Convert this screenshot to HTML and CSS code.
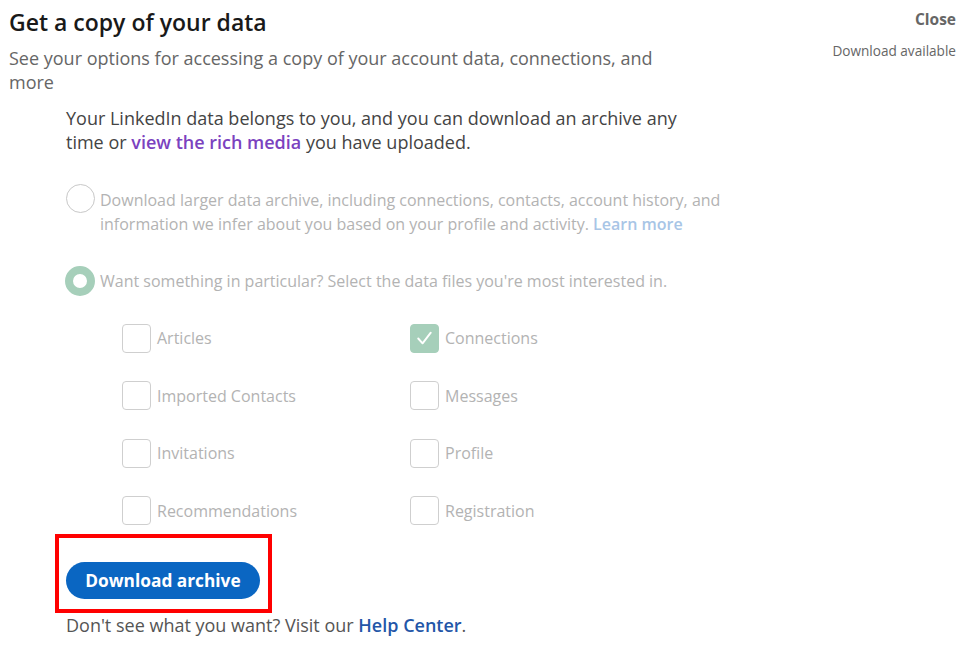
FILE: index.html
```html
<!DOCTYPE html>
<html lang="en">
<head>
<meta charset="utf-8">
<title>Get a copy of your data</title>
<link rel="stylesheet" href="styles.css">
</head>
<body>
<header class="header">
  <div class="header-text">
    <h1 class="title">Get a copy of your data</h1>
    <p class="subtitle">See your options for accessing a copy of your account data, connections, and more</p>
  </div>
  <div class="header-side">
    <a class="close">Close</a>
    <span class="status">Download available</span>
  </div>
</header>
<main class="content">
  <p class="intro">Your LinkedIn data belongs to you, and you can download an archive any time or <a class="media-link">view the rich media</a> you have uploaded.</p>

  <div class="option">
    <span class="radio"></span>
    <p class="option-text">Download larger data archive, including connections, contacts, account history, and information we infer about you based on your profile and activity. <a class="learn">Learn more</a></p>
  </div>

  <div class="option option-selected">
    <span class="radio radio-on"></span>
    <p class="option-text">Want something in particular? Select the data files you're most interested in.</p>
  </div>

  <div class="checks">
    <div class="check"><span class="box"></span><span>Articles</span></div>
    <div class="check"><span class="box box-on"><svg viewBox="0 0 28 28" width="28" height="28"><path d="M7.5 14.5 L12 19.5 L20.5 8.5" fill="none" stroke="#fff" stroke-width="2" stroke-linecap="round" stroke-linejoin="round"/></svg></span><span>Connections</span></div>
    <div class="check"><span class="box"></span><span>Imported Contacts</span></div>
    <div class="check"><span class="box"></span><span>Messages</span></div>
    <div class="check"><span class="box"></span><span>Invitations</span></div>
    <div class="check"><span class="box"></span><span>Profile</span></div>
    <div class="check"><span class="box"></span><span>Recommendations</span></div>
    <div class="check"><span class="box"></span><span>Registration</span></div>
  </div>

  <div class="action">
    <button class="download">Download archive</button>
  </div>

  <p class="help">Don't see what you want? Visit our <a class="help-link">Help Center</a>.</p>
</main>
</body>
</html>
```

FILE: styles.css
```css
*, *::before, *::after { box-sizing: border-box; }

body {
  margin: 0;
  background: #fff;
  font-family: "Open Sans", "Noto Sans", "Liberation Sans", sans-serif;
  color: #444;
}

p { margin: 0; }
a { text-decoration: none; cursor: pointer; }

.header {
  display: flex;
  justify-content: space-between;
  align-items: flex-start;
  padding: 6px 9px 0 9px;
}

.title {
  margin: 0;
  font-size: 23px;
  line-height: 32px;
  font-weight: 600;
  color: #191919;
}

.subtitle {
  width: 670px;
  margin-top: 8px;
  font-size: 18px;
  line-height: 24px;
  color: #666;
}

.header-side {
  display: flex;
  flex-direction: column;
  align-items: flex-end;
  padding-top: 3px;
}

.close {
  font-size: 15.5px;
  line-height: 20px;
  font-weight: 700;
  color: #666;
}

.status {
  margin-top: 13px;
  font-size: 13.6px;
  line-height: 18px;
  color: #666;
}

.content {
  padding: 12px 0 0 66px;
}

.intro {
  width: 640px;
  font-size: 18px;
  line-height: 24px;
  color: #444;
}

.media-link {
  font-weight: 600;
  color: #7b42bf;
}

.option {
  display: flex;
  align-items: flex-start;
  gap: 5px;
  margin-top: 30px;
  color: #b3b3b3;
}

.option-selected {
  margin-top: 30px;
  align-items: center;
}

.option-text {
  width: 660px;
  font-size: 16px;
  line-height: 24px;
  padding-top: 4px;
}

.option-selected .option-text { padding-top: 0; }

.learn {
  font-weight: 600;
  color: #a8c5e6;
}

.radio {
  flex: none;
  width: 29px;
  height: 29px;
  border-radius: 50%;
  border: 1.5px solid #c8c8c8;
}

.radio-on {
  border: 8px solid #a6cfba;
  width: 30px;
  height: 30px;
  margin-left: -1px;
}

.checks {
  display: grid;
  grid-template-columns: 288px 288px;
  grid-auto-rows: 30px;
  row-gap: 27.67px;
  margin: 27px 0 0 56px;
  color: #b3b3b3;
  font-size: 16px;
}

.check {
  display: flex;
  align-items: center;
  gap: 6px;
  height: 30px;
}

.box {
  flex: none;
  width: 29px;
  height: 29px;
  border: 1.5px solid #cfcfcf;
  border-radius: 4px;
  display: flex;
  align-items: center;
  justify-content: center;
}

.box-on {
  background: #a6cfba;
  border-color: #a6cfba;
}

.box-on svg { display: block; }

.action {
  position: relative;
  padding: 36px 0 14px 0;
}

.action::after {
  content: "";
  position: absolute;
  left: -11px;
  top: 8px;
  width: 217px;
  height: 79px;
  border: 4px solid #f00;
  pointer-events: none;
}

.download {
  display: block;
  width: 194px;
  height: 37px;
  border: none;
  border-radius: 19px;
  background: #0a66c2;
  color: #fff;
  font-family: inherit;
  font-size: 17.3px;
  font-weight: 700;
  padding: 0;
}

.help {
  font-size: 18px;
  line-height: 24px;
  color: #555;
}

.help-link {
  font-weight: 600;
  color: #2356a8;
}
```
